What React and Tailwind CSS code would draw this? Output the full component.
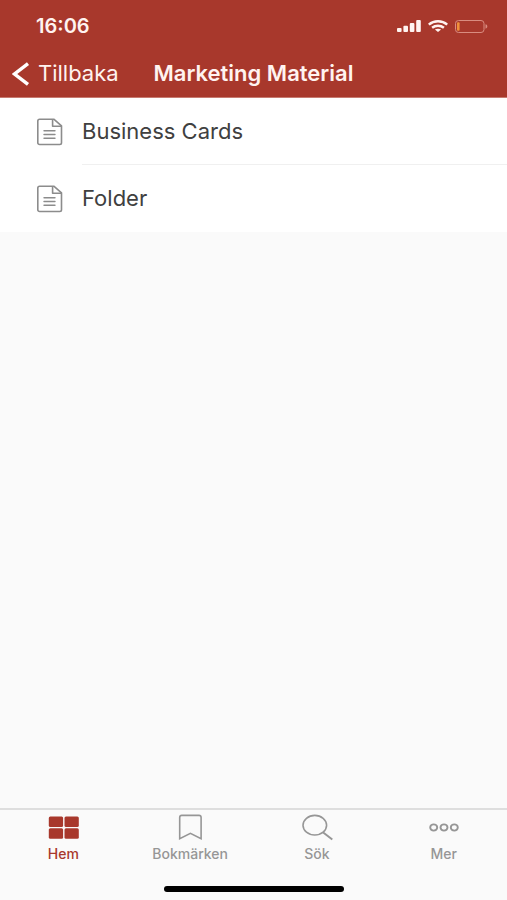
import React from "react";

const documents = ["Business Cards", "Folder"];

function StatusIcons() {
  return (
    <div className="flex items-center gap-[7px]">
      <svg width="24" height="12" viewBox="0 0 24 12" fill="currentColor" aria-hidden="true">
        <rect x="0" y="8" width="4.6" height="4" rx="1" />
        <rect x="6.4" y="5.7" width="4.6" height="6.3" rx="1" />
        <rect x="12.8" y="3" width="4.6" height="9" rx="1" />
        <rect x="19.2" y="0" width="4.6" height="12" rx="1" />
      </svg>
      <svg width="20" height="12" viewBox="0 0 20 12" fill="none" stroke="currentColor" strokeWidth="2.5" aria-hidden="true">
        <path d="M.8 4.6C6 .2 14 .2 19.2 4.6" />
        <path d="M4.1 7.8c3.4-2.7 8.4-2.7 11.8 0" />
        <path d="M6.9 9.6c1.8-1.3 4.4-1.3 6.2 0L10 12Z" fill="currentColor" stroke="none" />
      </svg>
      <svg width="33" height="13" viewBox="0 0 33 13" fill="none" aria-hidden="true">
        <rect x=".5" y=".5" width="28.5" height="12" rx="3" stroke="#d98c80" />
        <rect x="2" y="2.2" width="2.6" height="8.6" rx="1" fill="#f0913a" />
        <path d="M30.5 4.3c2.4.6 2.4 3.8 0 4.4Z" fill="#d98c80" />
      </svg>
    </div>
  );
}

function DocumentIcon() {
  return (
    <svg width="26" height="28" viewBox="0 0 26 28" fill="none" stroke="#8c8c8c" strokeWidth="1.6" strokeLinejoin="round" aria-hidden="true">
      <path d="M2.6 1.2h14.2l7.7 6.6v17c0 1-.7 1.7-1.8 1.7H2.6c-1.1 0-1.8-.7-1.8-1.7V2.9c0-1 .7-1.7 1.8-1.7Z" />
      <path d="M15.6 1.5v6.7h8.6" />
      <path d="M7 12.8h11M7 16.5h11M7 20.2h11" strokeLinecap="round" strokeWidth="1.4" />
    </svg>
  );
}

function HomeIcon() {
  return (
    <svg width="32" height="28" viewBox="0 0 32 28" fill="currentColor" aria-hidden="true">
      <rect x="1.8" y="2.6" width="14.3" height="10.5" rx="1.5" />
      <rect x="17.5" y="2.6" width="14.3" height="10.5" rx="1.5" />
      <rect x="1.8" y="14.3" width="14.3" height="10.5" rx="1.5" />
      <rect x="17.5" y="14.3" width="14.3" height="10.5" rx="1.5" />
    </svg>
  );
}

function BookmarkIcon() {
  return (
    <svg width="32" height="28" viewBox="0 0 32 28" fill="none" stroke="currentColor" strokeWidth="1.6" aria-hidden="true">
      <path d="M5.7 24.8V3.6c0-1.4.7-2.2 2.1-2.2h17.2c1.4 0 2.1.8 2.1 2.2v21.2L16.4 19.4Z" />
    </svg>
  );
}

function SearchIcon() {
  return (
    <svg width="32" height="28" viewBox="0 0 32 28" fill="none" stroke="currentColor" strokeWidth="1.6" aria-hidden="true">
      <ellipse cx="13.8" cy="11.2" rx="11.8" ry="9.8" />
      <path d="m21.9 18.3 9.4 7.2" strokeWidth="2" />
    </svg>
  );
}

function MoreIcon() {
  return (
    <svg width="32" height="28" viewBox="0 0 32 28" fill="none" stroke="currentColor" strokeWidth="1.9" aria-hidden="true">
      <ellipse cx="5.7" cy="13.5" rx="3.5" ry="3.1" />
      <ellipse cx="16" cy="13.5" rx="3.5" ry="3.1" />
      <ellipse cx="26.3" cy="13.5" rx="3.5" ry="3.1" />
    </svg>
  );
}

const tabs = [
  { label: "Hem", Icon: HomeIcon, active: true },
  { label: "Bokmärken", Icon: BookmarkIcon },
  { label: "Sök", Icon: SearchIcon },
  { label: "Mer", Icon: MoreIcon },
];

export default function App() {
  return (
    <div className="flex min-h-screen flex-col bg-[#fafafa] font-['Inter','Liberation_Sans',sans-serif] text-[#404040]">
      <header className="border-b border-[#c77a70] bg-[#a8382c] text-[#fff3f0]">
        <div className="flex h-12 items-center justify-between pt-1 pr-[19px] pl-9">
          <time className="text-xl font-semibold">16:06</time>
          <StatusIcons />
        </div>
        <div className="grid h-[49px] grid-cols-[1fr_auto_1fr] items-center px-3 pt-[2px]">
          <button type="button" className="flex items-center gap-2 text-[22px]">
            <svg width="18" height="24" viewBox="0 0 18 24" fill="none" stroke="#fff" strokeWidth="3.4" aria-hidden="true">
              <path d="M16 1.6 2.6 12 16 22.4" />
            </svg>
            Tillbaka
          </button>
          <h1 className="text-[22px] font-semibold">Marketing Material</h1>
        </div>
      </header>

      <main className="flex-1">
        <ul className="bg-white">
          {documents.map((name, index) => (
            <li key={name}>
              <button type="button" className="flex h-[67px] w-full items-center gap-[19px] pl-[37px] text-left text-[22px]">
                <DocumentIcon />
                <span className={`flex h-full flex-1 items-center ${index < documents.length - 1 ? "border-b border-[#f0f0f0]" : ""}`}>
                  {name}
                </span>
              </button>
            </li>
          ))}
        </ul>
      </main>

      <footer className="border-t-2 border-[#dedede]">
        <nav className="grid grid-cols-4 pt-1">
          {tabs.map(({ label, Icon, active }) => (
            <button
              key={label}
              type="button"
              aria-current={active ? "page" : undefined}
              className={`flex flex-col items-center gap-1 text-sm leading-4 font-medium ${active ? "text-[#a8382c]" : "text-[#969696]"}`}
            >
              <Icon />
              {label}
            </button>
          ))}
        </nav>
        <div className="flex justify-center pt-6 pb-2">
          <div className="h-[6px] w-[180px] rounded-full bg-black" />
        </div>
      </footer>
    </div>
  );
}
